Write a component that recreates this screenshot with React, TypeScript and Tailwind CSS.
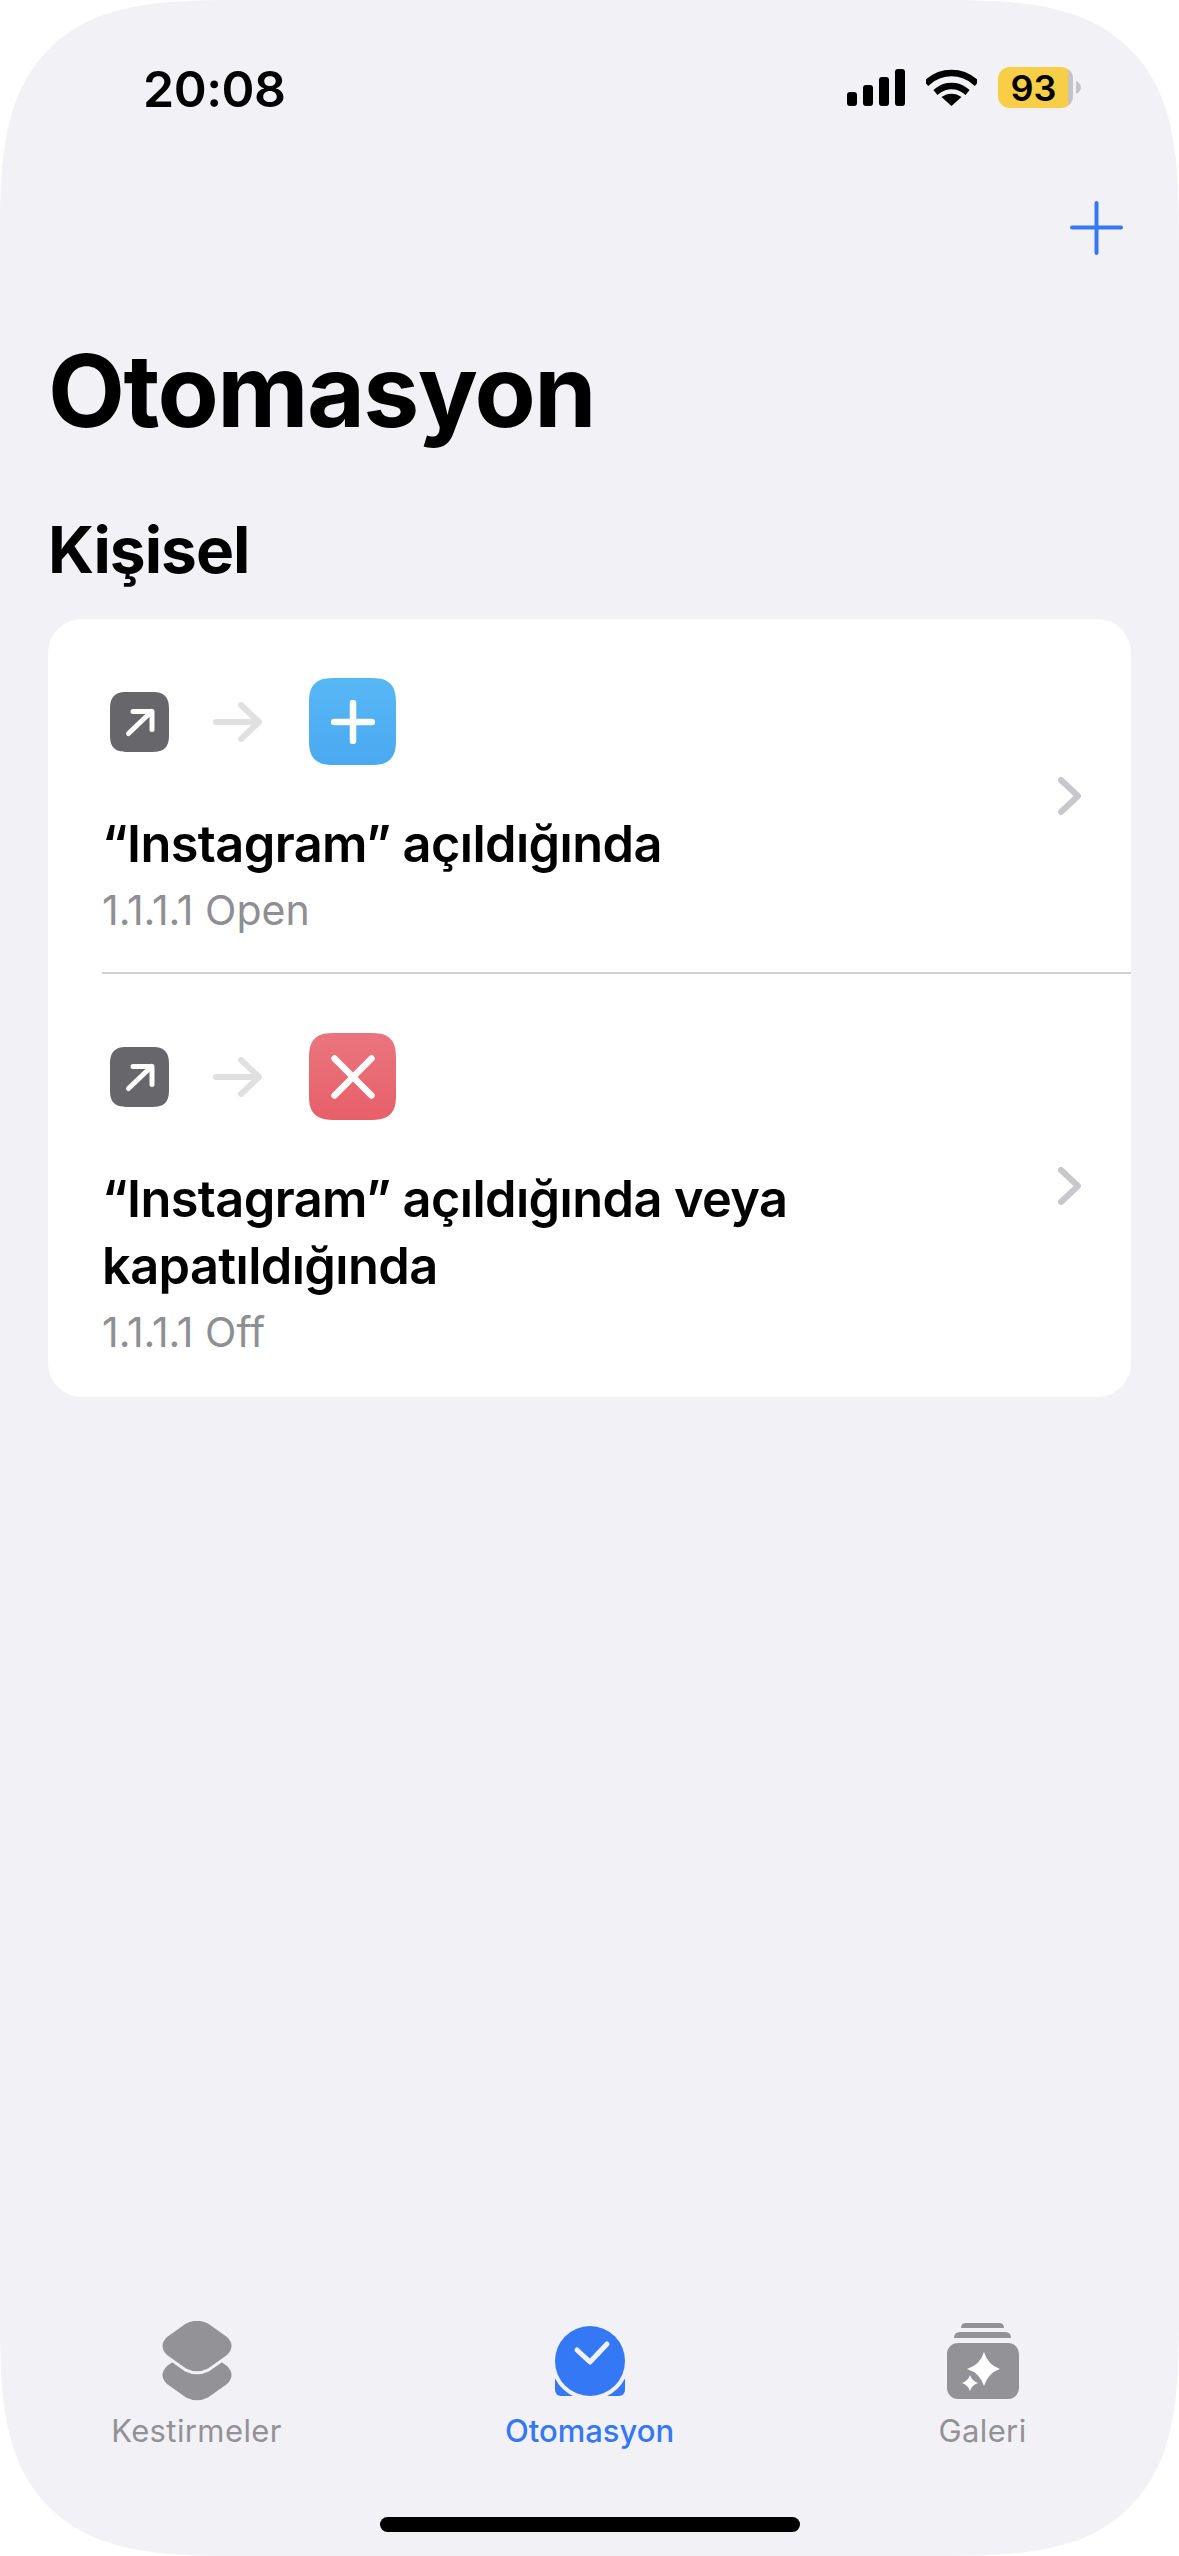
import { ReactNode } from 'react'

function Signal() {
  return (
    <svg width="58" height="37" viewBox="0 0 58 37" fill="black">
      <rect x="0" y="23" width="10" height="14" rx="3" />
      <rect x="16" y="16" width="10" height="21" rx="3" />
      <rect x="32" y="8" width="10" height="29" rx="3" />
      <rect x="48" y="0" width="10" height="37" rx="3" />
    </svg>
  )
}

function Wifi() {
  return (
    <svg width="51" height="37" viewBox="0 0 51 37" fill="none">
      <path d="M2.5 12.5C15.5 1 35.5 1 48.5 12.5" stroke="black" strokeWidth="6.5" strokeLinecap="square" strokeLinejoin="bevel" />
      <path d="M12 21.5C19.5 15.5 31.5 15.5 39 21.5" stroke="black" strokeWidth="6.5" strokeLinecap="square" />
      <path d="M25.5 37L15.5 28C21.5 23.5 29.5 23.5 35.5 28Z" fill="black" />
    </svg>
  )
}

function Battery() {
  return (
    <div className="flex items-center gap-[3px]">
      <div className="relative flex h-[41px] w-[75px] items-center justify-center overflow-hidden rounded-[12px] bg-[#f7ce46]">
        <span className="pr-[4px] text-[36px] leading-none font-semibold text-black">93</span>
        <div className="absolute top-0 right-0 bottom-0 w-[5px] bg-[#c4c4c8]" />
      </div>
      <svg width="5" height="13" viewBox="0 0 5 13">
        <path d="M0 0C3 1.5 5 4 5 6.5C5 9 3 11.5 0 13Z" fill="#c4c4c8" />
      </svg>
    </div>
  )
}

function OpenIcon() {
  return (
    <div className="ml-[8px] flex h-[60px] w-[59px] items-center justify-center rounded-[18px] bg-[#66666b] [corner-shape:superellipse(1.5)]">
      <svg width="59" height="60" viewBox="0 0 59 60" fill="none" stroke="white" strokeWidth="5" strokeLinecap="round" strokeLinejoin="round">
        <path d="M18.5 41.5L41.5 19.5" />
        <path d="M23 19.5H42V37.5" />
      </svg>
    </div>
  )
}

function FlowArrow() {
  return (
    <svg className="ml-[44px] mr-[47px]" width="49" height="40" viewBox="0 0 49 40" fill="none" stroke="#e0e0e0" strokeWidth="6" strokeLinecap="round" strokeLinejoin="round">
      <path d="M3 20H45" />
      <path d="M28 3L46 20L28 37" />
    </svg>
  )
}

function Row({ children, title, sub, bottom }: { children: ReactNode; title: string; sub: string; bottom: string }) {
  return (
    <div className="flex items-center pr-[50px]">
      <div className={bottom + ' flex-1 pt-[59px] pl-[54px]'}>
        <div className="flex h-[87px] items-center">
          <OpenIcon />
          <FlowArrow />
          {children}
        </div>
        <p className="mt-[45px] w-[880px] text-[50.5px] leading-[67px] font-semibold tracking-[-0.6px] text-black">{title}</p>
        <p className="mt-[8px] text-[41px] leading-[50px] text-[#8e8e93]">{sub}</p>
      </div>
      <svg width="23" height="38" viewBox="0 0 23 38" fill="none" stroke="#c7c7cc" strokeWidth="6" strokeLinecap="round" strokeLinejoin="round">
        <path d="M3 3L20 19L3 35" />
      </svg>
    </div>
  )
}

function ShortcutsIcon() {
  return (
    <svg width="70" height="80" viewBox="0 0 70 80">
      <path d="M24 31.5Q35 26 46 31.5L65 45Q74 54 65 63L46 76.5Q35 82 24 76.5L5 63Q-4 54 5 45Z" fill="#929297" />
      <path d="M24 2.5Q35 -3 46 2.5L65 16Q74 25 65 34L46 47.5Q35 53 24 47.5L5 34Q-4 25 5 16Z" fill="#929297" stroke="#f2f1f6" strokeWidth="6" paintOrder="stroke" />
    </svg>
  )
}

function AutomationIcon() {
  return (
    <svg width="70" height="70" viewBox="0 0 70 70" fill="none">
      <rect x="0" y="36" width="70" height="34" rx="6" fill="#3478f6" />
      <circle cx="35" cy="35" r="39" fill="#f2f1f6" />
      <circle cx="35" cy="35" r="35" fill="#3478f6" />
      <path d="M22 24L35 36L52 18" stroke="#f2f1f6" strokeWidth="5" strokeLinecap="round" strokeLinejoin="round" />
    </svg>
  )
}

function GalleryIcon() {
  return (
    <svg width="72" height="76" viewBox="0 0 72 76">
      <path d="M14 5Q14 0 19 0H52Q57 0 57 5Z" fill="#929297" />
      <path d="M7 15Q7 9 13 9H58Q64 9 64 15Z" fill="#929297" />
      <rect x="0" y="20" width="72" height="56" rx="11" fill="#929297" />
      <path d="M37 29Q41 42 53 46Q41 50 37 63Q33 50 20 46Q33 42 37 29Z" fill="white" />
      <path d="M23 52Q25 58 31 60Q25 62 23 68Q21 62 15 60Q21 58 23 52Z" fill="white" />
    </svg>
  )
}

function Tab({ icon, label, active }: { icon: ReactNode; label: string; active?: boolean }) {
  return (
    <div className="flex flex-col items-center">
      <div className="flex h-[80px] items-center justify-center">{icon}</div>
      <span className={(active ? 'text-[#3478f6] font-medium tracking-[0px]' : 'text-[#929297] tracking-[0.4px]') + ' mt-[10px] text-[31px] leading-[40px]'}>
        {label}
      </span>
    </div>
  )
}

export default function App() {
  return (
    <div className="h-[2556px] w-[1179px] bg-white font-['Inter',sans-serif]">
      <div className="flex h-full flex-col rounded-[240px] bg-[#f2f1f6] [corner-shape:superellipse(1.6)]">
        <div className="flex h-[201px] items-start justify-between pt-[62px] pr-[98px] pl-[143px]">
          <span className="text-[50px] leading-[54px] font-semibold tracking-[-0.5px] text-black">20:08</span>
          <div className="flex items-center gap-[21px] pt-[5px]">
            <Signal />
            <Wifi />
            <Battery />
          </div>
        </div>
        <div className="flex justify-end pr-[56px]">
          <svg width="53" height="54" viewBox="0 0 53 54" fill="none" stroke="#3478f6" strokeWidth="4" strokeLinecap="round">
            <path d="M26.5 2V52" />
            <path d="M2 26.5H51" />
          </svg>
        </div>
        <h1 className="mt-[81px] pl-[48px] text-[100px] leading-[110px] font-bold tracking-[-1.6px] text-black">Otomasyon</h1>
        <h2 className="mt-[65px] pl-[48px] text-[64px] leading-[78px] font-bold tracking-[-1px] text-black">Kişisel</h2>
        <div className="mx-[48px] mt-[30px] overflow-hidden rounded-[34px] bg-white">
          <Row title="“Instagram” açıldığında" sub="1.1.1.1 Open" bottom="pb-[37px]">
            <div className="flex h-[87px] w-[87px] items-center justify-center rounded-[26px] bg-gradient-to-b from-[#57b7f5] to-[#4aa9f1] [corner-shape:superellipse(1.5)]">
              <svg width="44" height="44" viewBox="0 0 44 44" fill="none" stroke="white" strokeWidth="6.5" strokeLinecap="round">
                <path d="M22 3V41" />
                <path d="M3 22H41" />
              </svg>
            </div>
          </Row>
          <div className="ml-[54px] h-[2px] bg-[#d0d0d2]" />
          <Row title="“Instagram” açıldığında veya kapatıldığında" sub="1.1.1.1 Off" bottom="pb-[40px]">
            <div className="flex h-[87px] w-[87px] items-center justify-center rounded-[26px] bg-gradient-to-b from-[#ea757e] to-[#e75f69] [corner-shape:superellipse(1.5)]">
              <svg width="44" height="44" viewBox="0 0 44 44" fill="none" stroke="white" strokeWidth="6.5" strokeLinecap="round">
                <path d="M3.5 3.5L40.5 40.5" />
                <path d="M40.5 3.5L3.5 40.5" />
              </svg>
            </div>
          </Row>
        </div>
        <div className="flex-1" />
        <div className="grid grid-cols-3">
          <Tab icon={<ShortcutsIcon />} label="Kestirmeler" />
          <Tab icon={<AutomationIcon />} label="Otomasyon" active />
          <Tab icon={<GalleryIcon />} label="Galeri" />
        </div>
        <div className="flex justify-center pt-[66px] pb-[24px]">
          <div className="h-[15px] w-[420px] rounded-full bg-black" />
        </div>
      </div>
    </div>
  )
}
